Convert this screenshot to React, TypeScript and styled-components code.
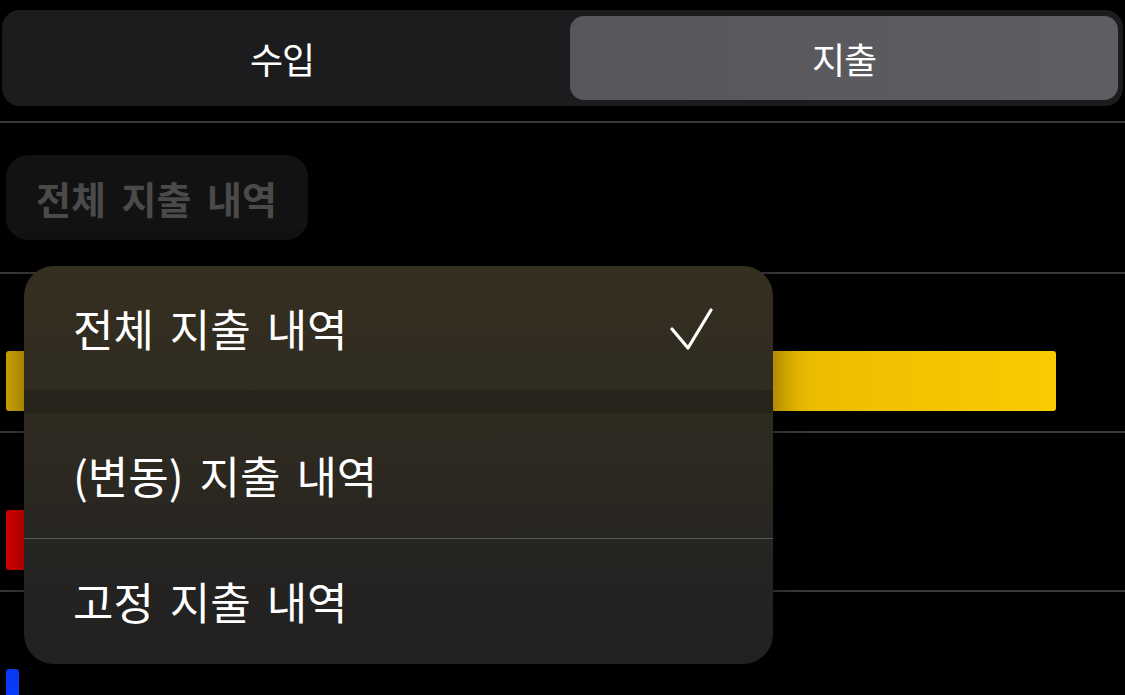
import React from "react";
import styled, {createGlobalStyle} from "styled-components";

const GlobalStyle = createGlobalStyle`
    html, body {
        margin: 0;
        padding: 0;
        background: #000;
        overflow: hidden;
    }
    body {
        font-family: "Noto Sans CJK KR", "Noto Sans", sans-serif;
        color: #fff;
    }
`;

const Screen = styled.div`
    position: relative;
    width: 1125px;
    height: 695px;
    background: #000;
    overflow: hidden;
`;

const Segmented = styled.div`
    margin: 10px 2px 15px;
    height: 96px;
    box-sizing: border-box;
    padding: 6px 5px 6px 6px;
    display: grid;
    grid-template-columns: 1fr 1fr;
    gap: 14px;
    background: #1c1c1e;
    border-radius: 18px;
`;

const Segment = styled.div<{ $active?: boolean }>`
    display: flex;
    align-items: center;
    justify-content: center;
    border-radius: 14px;
    font-size: 36px;
    font-weight: 400;
    letter-spacing: -1px;
    color: #fff;
    background: ${p => p.$active ? "linear-gradient(90deg, #56565b, #5e5e62)" : "transparent"};
`;

const Row = styled.div<{ $first?: boolean }>`
    border-top: 2px solid #3a3a3c;
    height: ${p => p.$first ? "149px" : "157px"};
    display: flex;
    flex-direction: column;
    justify-content: ${p => p.$first ? "center" : "flex-end"};
    padding: 0 6px;
`;

const FilterPill = styled.div`
    align-self: flex-start;
    height: 85px;
    box-sizing: border-box;
    padding: 0 31px 0 30px;
    display: flex;
    align-items: center;
    border-radius: 22px;
    background: #121212;
    color: #4a4a4b;
    font-size: 38px;
    font-weight: 700;
    word-spacing: 7px;
`;

const Bar = styled.div<{ $color: string }>`
    height: 60px;
    margin-bottom: 20px;
    border-radius: 3px;
    background: ${p => p.$color};
`;

const Menu = styled.div`
    position: absolute;
    left: 24px;
    top: 266px;
    width: 749px;
    height: 398px;
    border-radius: 30px;
    overflow: hidden;
    display: flex;
    flex-direction: column;
    background: linear-gradient(180deg, #352f20 0%, #2e2a21 45%, #242322 80%, #212121 100%);
    box-shadow: 0 10px 40px rgba(0, 0, 0, 0.5);
`;

const MenuItem = styled.div`
    height: 124px;
    display: flex;
    align-items: center;
    justify-content: space-between;
    padding: 0 60px 0 49px;
    font-size: 44px;
    font-weight: 400;
    word-spacing: 6px;
    color: #fff;
`;

const GroupGap = styled.div`
    height: 23px;
    background: rgba(0, 0, 0, 0.18);
`;

const Divider = styled.div`
    height: 1px;
    margin-top: 1px;
    background: #5b5955;
`;

const Check = () => (
  <svg width="44" height="44" viewBox="0 0 44 44" fill="none">
    <polyline points="3,23 19,42 42,4" stroke="#fff" strokeWidth="3.2" strokeLinecap="round" strokeLinejoin="round"/>
  </svg>
);

export default function App() {
  return (
    <>
      <GlobalStyle/>
      <Screen>
        <Segmented>
          <Segment>수입</Segment>
          <Segment $active>지출</Segment>
        </Segmented>
        <Row $first>
          <FilterPill>전체 지출 내역</FilterPill>
        </Row>
        <Row>
          <Bar $color="linear-gradient(90deg, #dcae00 0%, #e3b300 60%, #fcca00 100%)" style={{width: 1050}}/>
        </Row>
        <Row>
          <Bar $color="#e10000" style={{width: "32%"}}/>
        </Row>
        <Row>
          <Bar $color="#0a3cff" style={{width: 13}}/>
        </Row>
        <Menu>
          <MenuItem>
            <span>전체 지출 내역</span>
            <Check/>
          </MenuItem>
          <GroupGap/>
          <MenuItem>(변동) 지출 내역</MenuItem>
          <Divider/>
          <MenuItem>고정 지출 내역</MenuItem>
        </Menu>
      </Screen>
    </>
  );
}
